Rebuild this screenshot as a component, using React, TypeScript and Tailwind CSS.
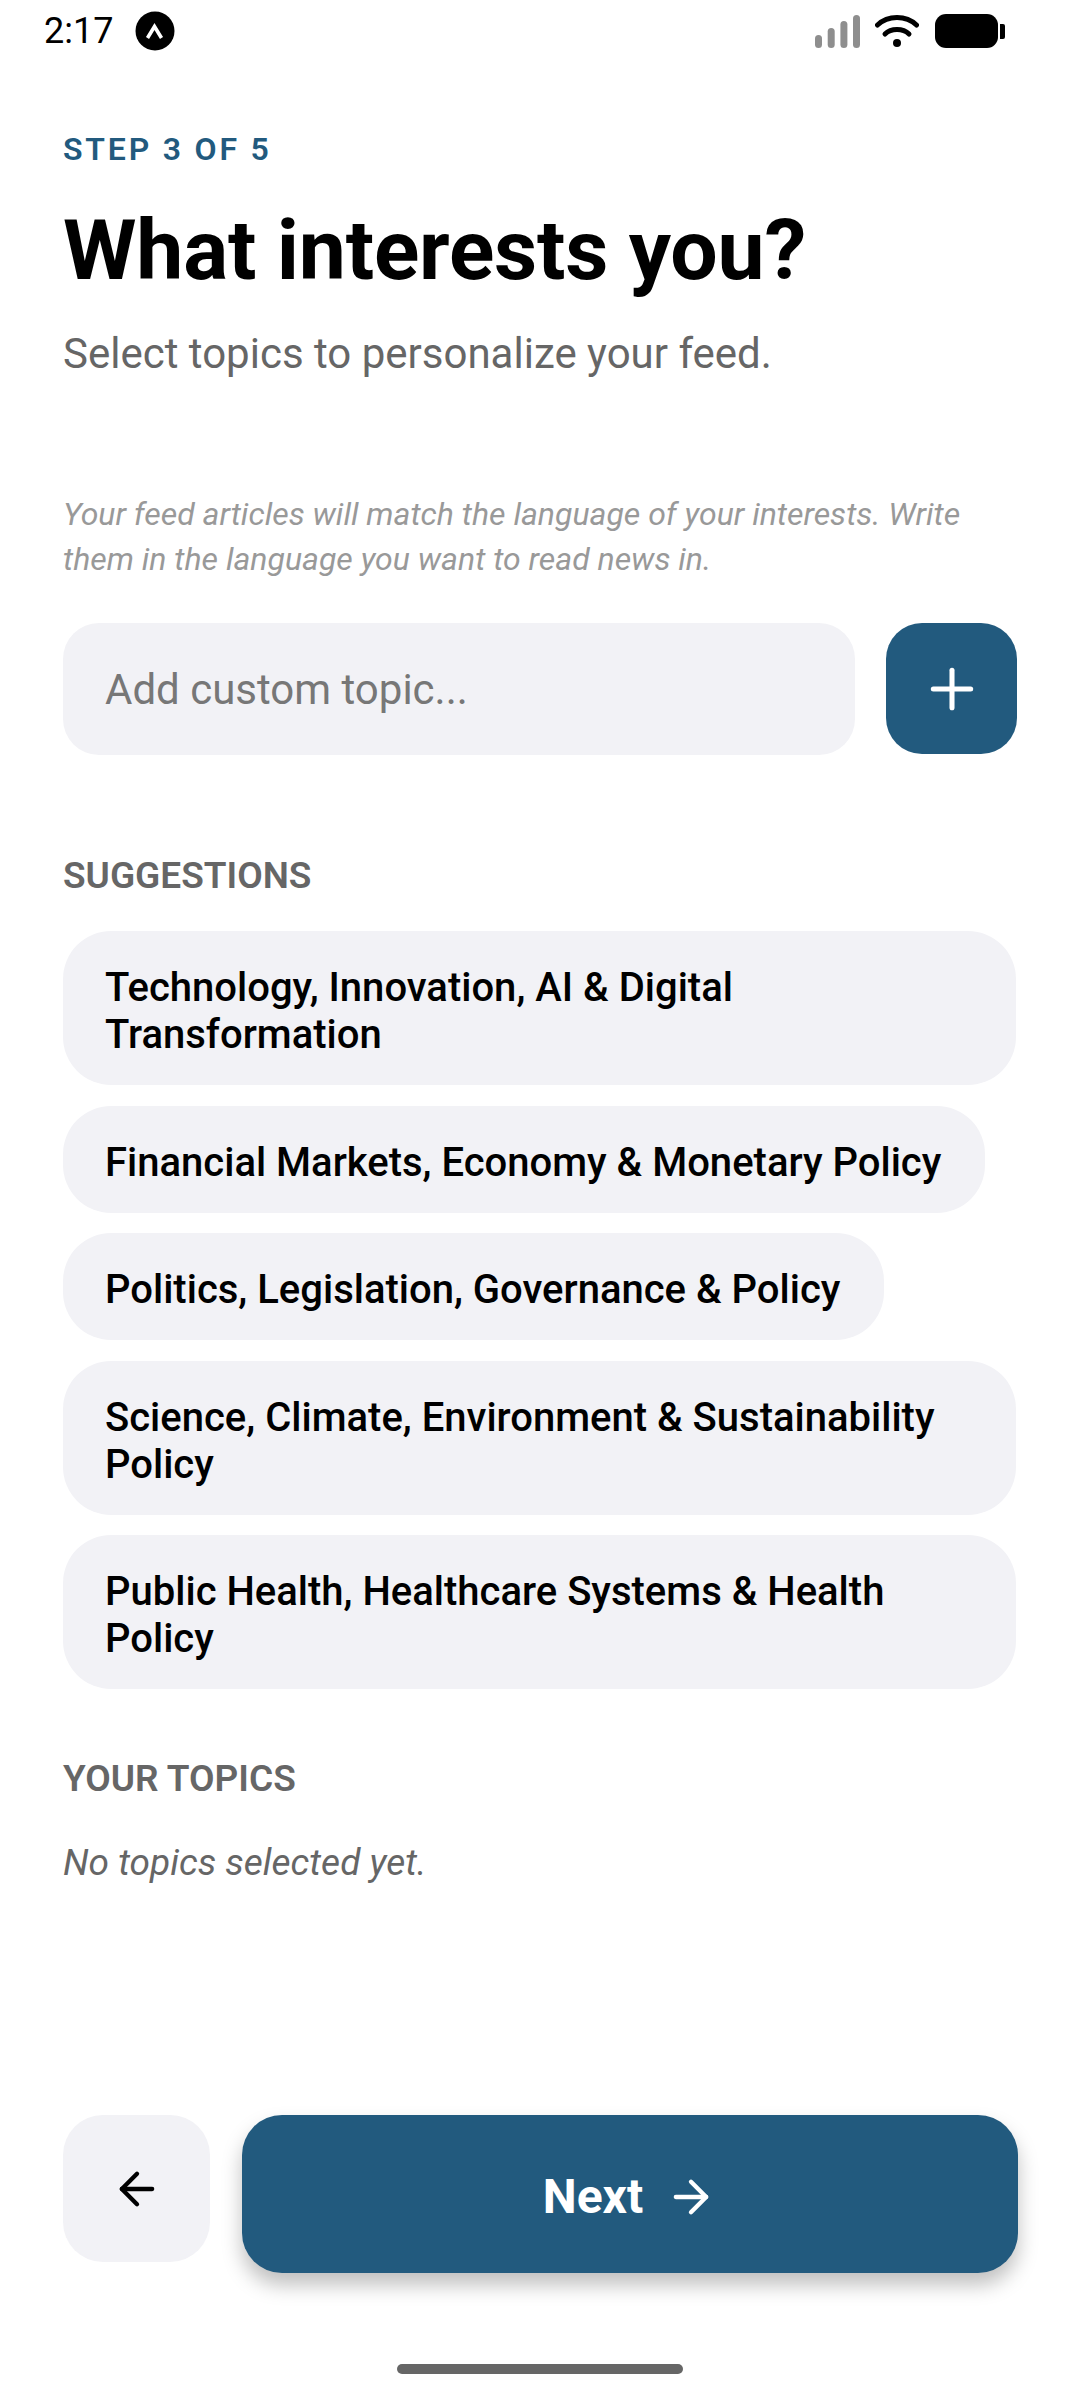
import { ArrowLeft, ArrowRight, Plus } from "lucide-react";

const suggestions = [
  "Technology, Innovation, AI & Digital Transformation",
  "Financial Markets, Economy & Monetary Policy",
  "Politics, Legislation, Governance & Policy",
  "Science, Climate, Environment & Sustainability Policy",
  "Public Health, Healthcare Systems & Health Policy",
];

function StatusBar() {
  return (
    <div className="flex h-[62px] items-center justify-between pl-[44px] pr-[75px]">
      <div className="flex items-center gap-[22px]">
        <span className="text-[36px] leading-[42px] text-black">2:17</span>
        {/* app glyph */}
        <svg width="40" height="40" viewBox="0 0 40 40">
          <circle cx="20" cy="20" r="19.5" fill="#000" />
          <path d="M12.5 27 L19.5 15.5 L26.5 27" fill="none" stroke="#fff" strokeWidth="3.6" />
        </svg>
      </div>
      <div className="flex items-center gap-[15px]">
        <svg width="45" height="33" viewBox="0 0 45 33">
          <g fill="#8e8e8e">
            <rect x="0" y="20" width="7" height="13" rx="3.5" />
            <rect x="12.7" y="13" width="7" height="20" rx="3.5" />
            <rect x="25.4" y="6" width="7" height="27" rx="3.5" />
            <rect x="38" y="0" width="7" height="33" rx="3.5" />
          </g>
        </svg>
        <svg width="44" height="34" viewBox="0 0 44 34">
          <path d="M2.5 11 C13 1 31 1 41.5 11" fill="none" stroke="#000" strokeWidth="5" strokeLinecap="round" />
          <path d="M10 20 C16 14 28 14 34 20" fill="none" stroke="#000" strokeWidth="5" strokeLinecap="round" />
          <circle cx="22" cy="29" r="4" fill="#000" />
        </svg>
        <div className="ml-[1px] flex items-center">
          <div className="h-[34px] w-[63px] rounded-[11px] bg-black" />
          <div className="ml-[2px] h-[15px] w-[5px] rounded-r-[2px] bg-black" />
        </div>
      </div>
    </div>
  );
}

export default function App() {
  return (
    <div
      className="flex h-[2400px] w-[1080px] flex-col overflow-hidden bg-white"
      style={{ fontFamily: "Roboto, sans-serif" }}
    >
      <StatusBar />

      <div className="flex-1 pl-[63px] pr-[63px] pt-[69px]">
        <div className="text-[32px] font-semibold leading-[36px] tracking-[2.8px] text-[#225a7e]">
          STEP 3 OF 5
        </div>
        <h1 className="mt-[36px] text-[84px] font-bold leading-[96px] tracking-[-0.2px] text-black">
          What interests you?
        </h1>
        <p className="mt-[28px] text-[42px] leading-[54px] text-[#666]">
          Select topics to personalize your feed.
        </p>

        <p className="mt-[111px] text-[32px] italic leading-[45px] text-[#999]">
          Your feed articles will match the language of your interests. Write them in the language you want to read news in.
        </p>

        <div className="mt-[41px] flex gap-[31px]">
          <div className="flex h-[132px] flex-1 items-center rounded-[36px] bg-[#f2f2f6] px-[42px] text-[42px] text-[#777]">
            Add custom topic...
          </div>
          <button className="flex h-[131px] w-[131px] items-center justify-center rounded-[36px] bg-[#225a7e]">
            <Plus size={64} color="#fff" strokeWidth={1.9} />
          </button>
        </div>

        <div className="mt-[99px] text-[37px] font-semibold leading-[44px] text-[#666]">
          SUGGESTIONS
        </div>

        <div className="mt-[33px] flex max-w-[953px] flex-col items-start gap-[20.5px]">
          {suggestions.map((topic) => (
            <button
              key={topic}
              className="rounded-[48px] bg-[#f2f2f6] pb-[27px] pl-[42px] pr-[44px] pt-[33px] text-left text-[40px] font-medium leading-[47px] text-black"
            >
              {topic}
            </button>
          ))}
        </div>

        <div className="mt-[68px] text-[37px] font-semibold leading-[44px] text-[#666]">
          YOUR TOPICS
        </div>
        <p className="mt-[39px] text-[37px] italic leading-[46px] text-[#666]">
          No topics selected yet.
        </p>
      </div>

      <div className="flex items-start gap-[32px] pl-[63px] pr-[62px]">
        <button className="flex h-[147px] w-[147px] items-center justify-center rounded-[40px] bg-[#f2f2f6]">
          <ArrowLeft size={52} color="#000" strokeWidth={2} />
        </button>
        <button className="flex h-[158px] flex-1 items-center justify-center gap-[22px] rounded-[40px] bg-[#225a7e] pt-[6px] text-[48px] font-bold text-white shadow-[0_12px_20px_rgba(0,0,0,0.25)]">
          Next
          <ArrowRight size={52} color="#fff" strokeWidth={2} />
        </button>
      </div>

      <div className="flex justify-center pb-[26px] pt-[91px]">
        <div className="h-[10px] w-[286px] rounded-full bg-[#666]" />
      </div>
    </div>
  );
}
